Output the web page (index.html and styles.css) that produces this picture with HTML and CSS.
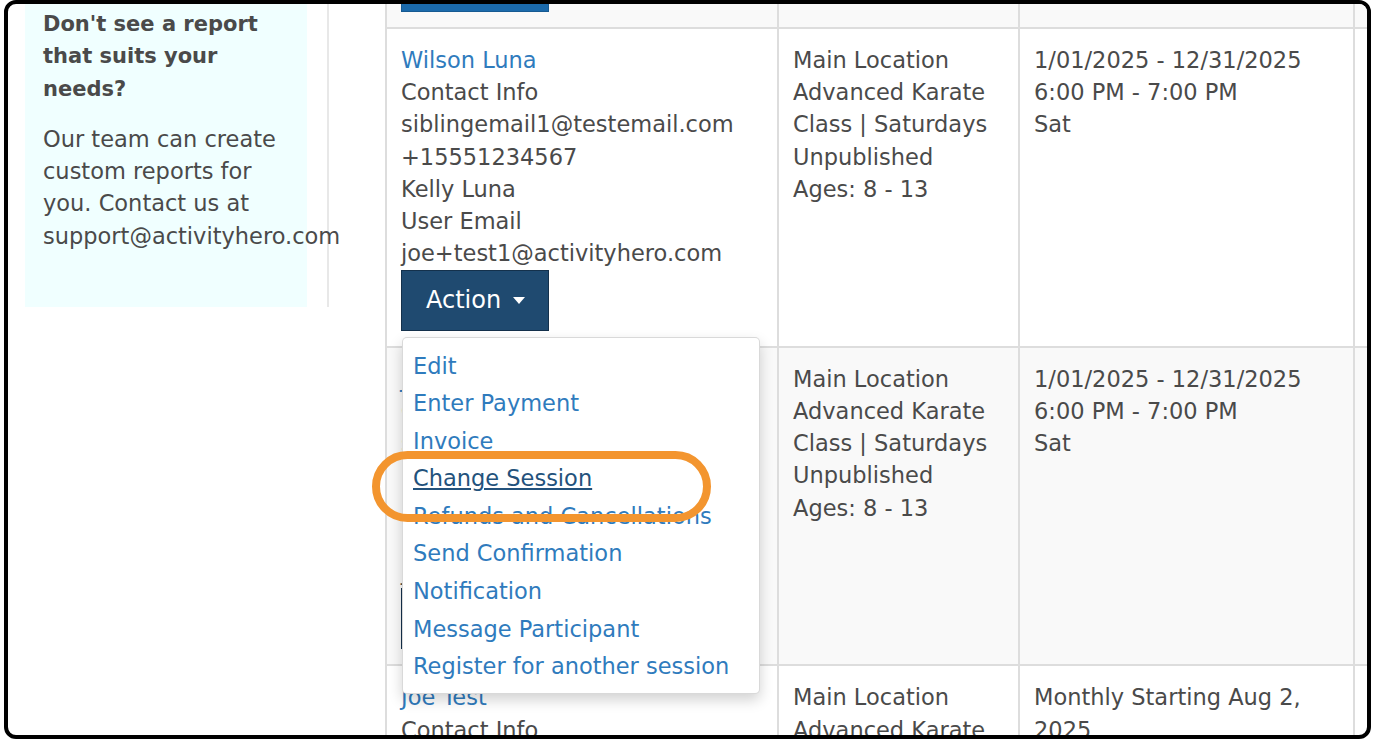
FILE: index.html
```html
<!DOCTYPE html>
<html lang="en">
<head>
    <meta charset="UTF-8">
    <meta name="viewport" content="width=device-width, initial-scale=1.0">
    <title>Roster Report</title>
    <link rel="stylesheet" href="styles.css">
</head>
<body>
    <div class="frame">
        <div class="page">
            <aside class="sidebar">
                <div class="help-box">
                    <h3>Don't see a report that suits your needs?</h3>
                    <p>Our team can create custom reports for you. Contact us at support@activityhero.com</p>
                </div>
            </aside>

            <main class="report">
                <table class="roster">
                    <tbody>
                        <tr class="striped">
                            <td class="col-participant">
                                <a href="#">Maya Luna</a>
                                <div>Contact Info</div>
                                <div>siblingemail1@testemail.com</div>
                                <div>+15551234567</div>
                                <div>Kelly Luna</div>
                                <div>User Email</div>
                                <div>joe+test1@activityhero.com</div>
                                <button class="btn-action btn-primary">Action <span class="caret"></span></button>
                            </td>
                            <td class="col-session">
                                <div>Main Location</div>
                                <div>Advanced Karate Class | Saturdays</div>
                                <div>Unpublished</div>
                                <div>Ages: 8 - 13</div>
                            </td>
                            <td class="col-schedule">
                                <div>1/01/2025 - 12/31/2025</div>
                                <div>6:00 PM - 7:00 PM</div>
                                <div>Sat</div>
                            </td>
                            <td class="col-extra"></td>
                        </tr>

                        <tr>
                            <td>
                                <a href="#">Wilson Luna</a>
                                <div>Contact Info</div>
                                <div>siblingemail1@testemail.com</div>
                                <div>+15551234567</div>
                                <div>Kelly Luna</div>
                                <div>User Email</div>
                                <div>joe+test1@activityhero.com</div>
                                <div class="dropdown">
                                    <button class="btn-action">Action <span class="caret"></span></button>
                                    <ul class="dropdown-menu">
                                        <li><a href="#">Edit</a></li>
                                        <li><a href="#">Enter Payment</a></li>
                                        <li><a href="#">Invoice</a></li>
                                        <li><a href="#" class="hover">Change Session</a></li>
                                        <li><a href="#">Refunds and Cancellations</a></li>
                                        <li><a href="#">Send Confirmation</a></li>
                                        <li><a href="#">Notification</a></li>
                                        <li><a href="#">Message Participant</a></li>
                                        <li><a href="#">Register for another session</a></li>
                                    </ul>
                                    <!-- annotation ring around the highlighted option -->
                                    <div class="highlight-ring"></div>
                                </div>
                            </td>
                            <td>
                                <div>Main Location</div>
                                <div>Advanced Karate Class | Saturdays</div>
                                <div>Unpublished</div>
                                <div>Ages: 8 - 13</div>
                            </td>
                            <td>
                                <div>1/01/2025 - 12/31/2025</div>
                                <div>6:00 PM - 7:00 PM</div>
                                <div>Sat</div>
                            </td>
                            <td></td>
                        </tr>

                        <tr class="striped">
                            <td>
                                <a href="#">Jasmine Test</a>
                                <div>Contact Info</div>
                                <div>siblingemail1@testemail.com</div>
                                <div>+15551234567</div>
                                <div>Joe Test</div>
                                <div>User Email</div>
                                <div>joe+test1@activityhero.com</div>
                                <button class="btn-action">Action <span class="caret"></span></button>
                            </td>
                            <td>
                                <div>Main Location</div>
                                <div>Advanced Karate Class | Saturdays</div>
                                <div>Unpublished</div>
                                <div>Ages: 8 - 13</div>
                            </td>
                            <td>
                                <div>1/01/2025 - 12/31/2025</div>
                                <div>6:00 PM - 7:00 PM</div>
                                <div>Sat</div>
                            </td>
                            <td></td>
                        </tr>

                        <tr>
                            <td>
                                <a href="#">Joe Test</a>
                                <div>Contact Info</div>
                                <div>joe+test1@activityhero.com</div>
                            </td>
                            <td>
                                <div>Main Location</div>
                                <div>Advanced Karate Class | Saturdays</div>
                            </td>
                            <td>
                                <div>Monthly Starting Aug 2, 2025</div>
                            </td>
                            <td></td>
                        </tr>
                    </tbody>
                </table>
            </main>
        </div>
    </div>
</body>
</html>
```

FILE: styles.css
```css
:root {
    --text: #4a4a4a;
    --link: #2f7bbd;
    --link-hover: #23527c;
    --navy: #1f4a70;
    --navy-border: #14314c;
    --blue: #1b6aab;
    --line: #dddddd;
    --stripe: #f9f9f9;
    --help-bg: #f0ffff;
    --ring: #f3952f;
}

* {
    box-sizing: border-box;
}

body {
    margin: 0;
    background: #ffffff;
    font-family: "DejaVu Sans", sans-serif;
    font-size: 22.5px;
    line-height: 32.25px;
    color: var(--text);
}

a {
    color: var(--link);
    text-decoration: none;
}

.frame {
    margin-left: 4px;
    width: 1367px;
    height: 739px;
    border: 4px solid #000;
    border-radius: 12px;
    overflow: hidden;
    background: #fff;
}

.page {
    display: flex;
    align-items: flex-start;
    gap: 56px;
    padding-left: 17px;
}

/* left column */
.sidebar {
    flex: none;
    margin-top: -20px;
    padding-right: 20px;
    border-right: 2px solid #e8e8e8;
}

.help-box {
    width: 282px;
    padding: 24px 18px 55px;
    background: var(--help-bg);
}

.help-box h3 {
    margin: 0 0 18px;
    font-size: 21px;
    font-weight: bold;
}

.help-box p {
    margin: 0;
}

/* roster table */
.report {
    flex: none;
    margin-top: -296px;
}

.roster {
    border-collapse: separate;
    border-spacing: 0;
    table-layout: fixed;
    width: 1368px;
}

.roster td {
    vertical-align: top;
    padding: 15px 14px;
    border-top: 2px solid var(--line);
    border-left: 2px solid var(--line);
}

.roster tr.striped td {
    background: var(--stripe);
}

.col-participant { width: 392px; }
.col-session { width: 241px; }
.col-schedule { width: 335px; }
.col-extra { width: 400px; }

.btn-action {
    display: block;
    height: 61px;
    padding: 0 23px 0 24px;
    border: 1px solid var(--navy-border);
    border-radius: 0;
    background: var(--navy);
    color: #fff;
    font-family: inherit;
    font-size: 24px;
    line-height: 59px;
    cursor: pointer;
}

.btn-action.btn-primary {
    background: var(--blue);
    border-color: #165a92;
}

.caret {
    display: inline-block;
    margin-left: 4px;
    vertical-align: middle;
    border-top: 7px solid #fff;
    border-left: 6.5px solid transparent;
    border-right: 6.5px solid transparent;
}

/* dropdown */
.dropdown {
    position: relative;
}

.dropdown-menu {
    position: absolute;
    top: 67px;
    left: 1px;
    z-index: 10;
    width: 358px;
    margin: 0;
    padding: 10px 0 7px;
    list-style: none;
    background: #fff;
    border: 1px solid rgba(0, 0, 0, 0.15);
    border-radius: 5px;
    box-shadow: 0 6px 14px rgba(0, 0, 0, 0.18);
}

.dropdown-menu a {
    display: block;
    padding: 3px 10px;
    line-height: 31.6px;
    white-space: nowrap;
}

.dropdown-menu a.hover {
    color: var(--link-hover);
    text-decoration: underline;
}

.highlight-ring {
    position: absolute;
    top: 181px;
    left: -29px;
    z-index: 11;
    width: 339px;
    height: 71px;
    border: 8px solid var(--ring);
    border-radius: 36px;
    pointer-events: none;
}
```
